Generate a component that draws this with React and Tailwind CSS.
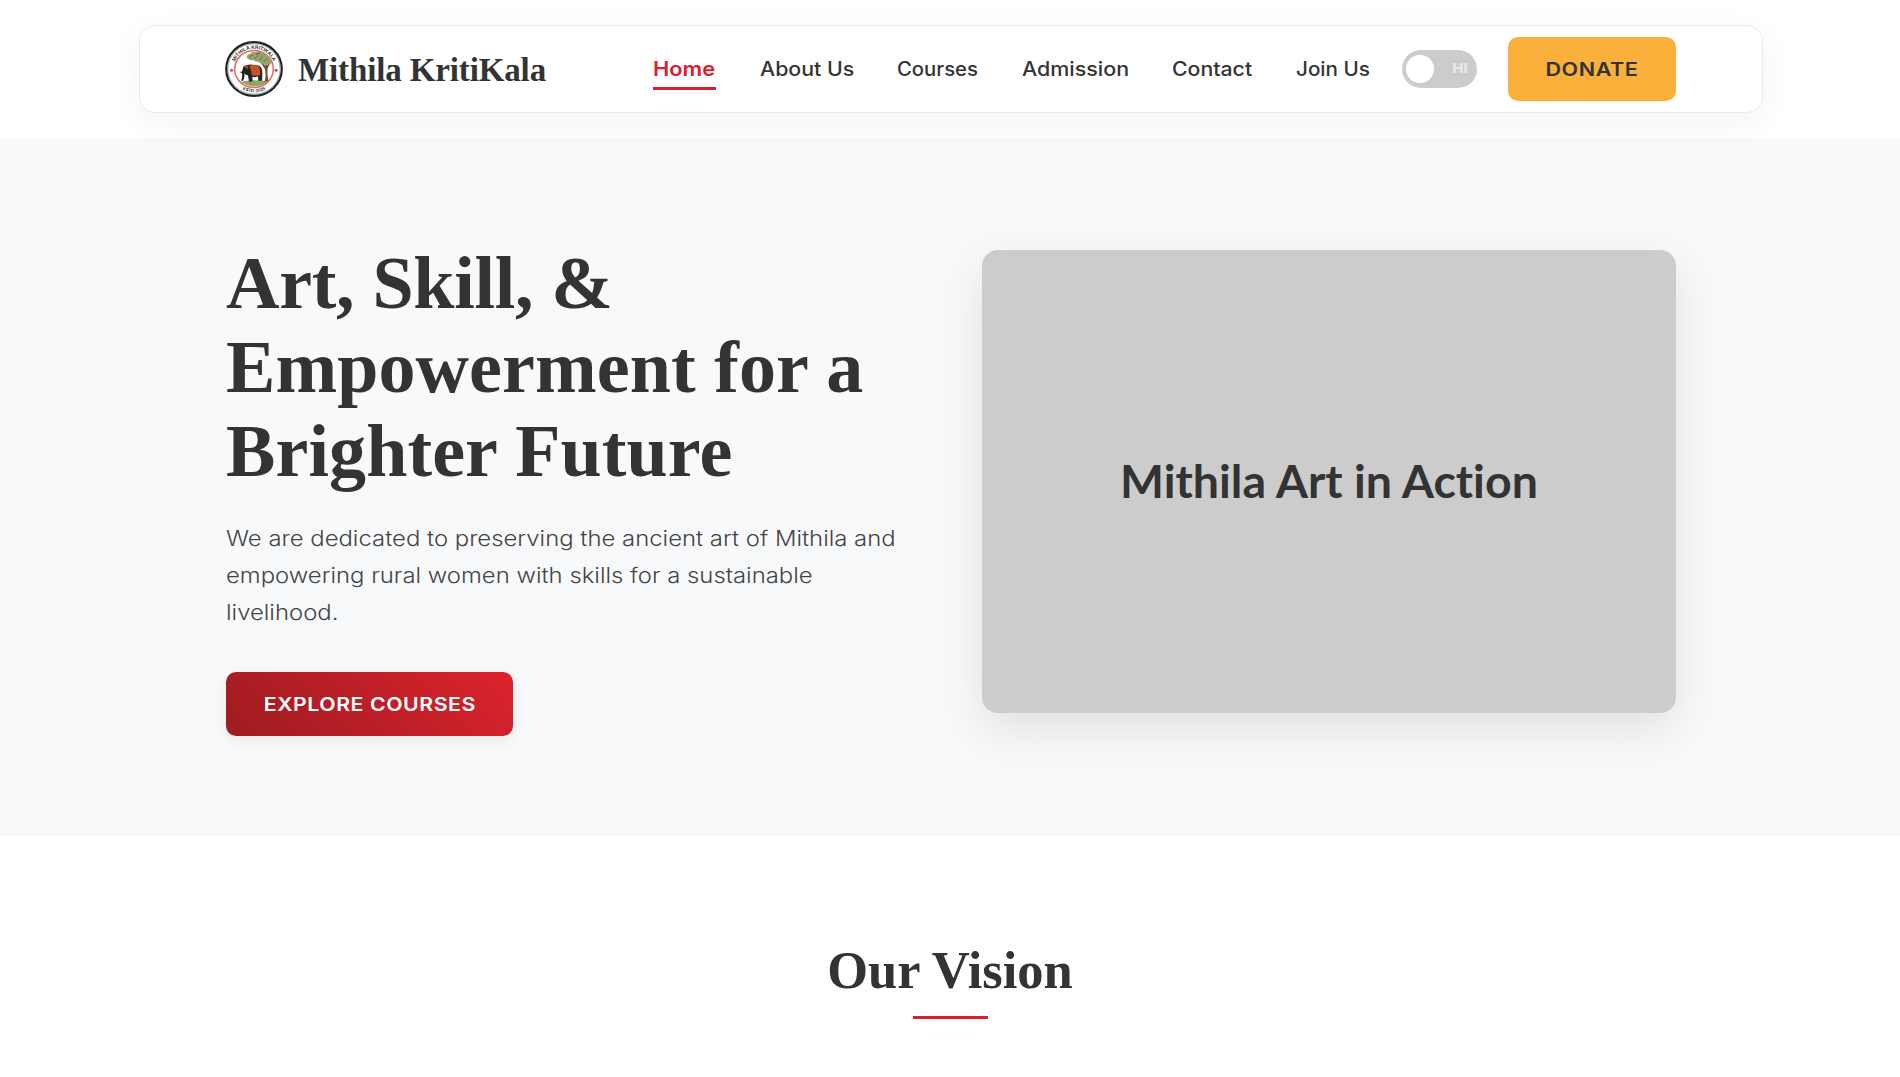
import React from "react";

const links = [
  { label: "About Us", box: "w-[94px]", stretch: "scale-x-[1.095]" },
  { label: "Courses", box: "w-[81px]", stretch: "scale-x-[1.04]" },
  { label: "Admission", box: "w-[107px]", stretch: "scale-x-[1.1]" },
  { label: "Contact", box: "w-[80px]", stretch: "scale-x-[1.09]" },
  { label: "Join Us", box: "w-[74px]", stretch: "scale-x-[1.06]" },
];

function Emblem() {
  return (
    <svg viewBox="0 0 58 56" preserveAspectRatio="none" className="h-14 w-[58px] shrink-0">
      <defs>
        <path id="arc-top" d="M8.4 28 A20.6 20.2 0 0 1 49.6 28" />
        <path id="arc-bottom" d="M5.2 28 A23.8 23.2 0 0 0 52.8 28" />
      </defs>
      <ellipse cx="29" cy="28" rx="27.8" ry="26.8" fill="#fff" stroke="#222" strokeWidth="2.2" />
      <ellipse cx="29" cy="28" rx="26.2" ry="25.2" fill="none" stroke="#777" strokeWidth="0.7" />
      <ellipse cx="29" cy="28" rx="19.3" ry="18.6" fill="#fff" stroke="#e8655f" strokeWidth="1.5" />
      <text fontFamily="Liberation Sans" fontWeight="bold" fontSize="5" fill="#2b2b2b">
        <textPath href="#arc-top" startOffset="50%" textAnchor="middle">MITHILA KRITIKALA</textPath>
      </text>
      <text fontFamily="Liberation Sans" fontWeight="bold" fontSize="4.4" fill="#333">
        <textPath href="#arc-bottom" startOffset="50%" textAnchor="middle">ESTD. 2025</textPath>
      </text>
      <circle cx="6.6" cy="29.3" r="1.5" fill="#e0453d" />
      <circle cx="51.2" cy="29.3" r="1.5" fill="#e0453d" />
      <path d="M17 40.5 Q29 38.5 41 40 L42 41 Q37 45.5 29 45.2 Q22 45 17 41.5Z" fill="#8fa860" />
      <path d="M39.5 41 Q41.6 34 39.8 28 L36 22 L37 21.5 L40.5 25 L40.8 19 L42 19 L42 24.5 L44.5 21.5 L45.2 22.2 L42.6 27.5 Q42 35 43.4 40Z" fill="#7b4a34" />
      <path d="M22 17 Q21 13.5 25 13 Q27 10 31 11 Q35 9.8 38 12 Q42 12.3 43.4 16 Q46.5 18 46.2 22 Q45 25 42.8 23 Q40 25 37.6 22.6 Q34.5 23 33.5 20.5 Q30 21.5 28.8 19 Q25 20 22 17Z" fill="#95a36c" />
      <path d="M24 16 L28 14 M29 18 L33 14.5 M34 19 L38 15.5 M38.5 21 L42 17.5 M31 13 L35 12.5" stroke="#5f6f3d" strokeWidth="1" />
      <path d="M17.5 29 Q17.5 24.5 22 24.3 Q25 23 29 24 Q35 23.2 36.8 28 Q37.8 32 37 39.8 H33.3 L33 35.3 Q29.5 37 27.5 35.5 L27.5 40.5 H24 L23 34.5 Q20.8 34 19.6 32.5 Q19.7 38 17.6 40 L16.2 39.4 Q17.6 36 17 32 L14.5 31.3 L17 30.6Z" fill="#272324" />
      <path d="M24.3 25.2 Q29 22.5 33.6 24.8 Q35.6 28 35.2 34 Q31.5 35.6 26.6 34 Q26.8 29 24.3 25.2Z" fill="#c4541f" />
      <path d="M19 25 Q21.5 23.5 23.3 25.6 L22.3 28.5Z" fill="#b94a25" />
    </svg>
  );
}

export default function App() {
  return (
    <div className="h-[1077px] w-full overflow-hidden bg-white font-['Inter',sans-serif] text-[#333]">
      <header className="flex h-[138px] pt-[25px] pl-[139px]">
        <nav className="flex h-[88px] w-[1624px] items-center rounded-2xl border border-[#ebebeb] bg-white pl-[85px] shadow-[0_8px_32px_rgba(0,0,0,0.05)]">
          <Emblem />
          <a className="ml-[15px] w-[355px] shrink-0 whitespace-nowrap pt-0.5 font-['Liberation_Serif',serif] text-[33px] leading-10 font-bold tracking-[-0.13px]">
            Mithila KritiKala
          </a>
          <div className="flex shrink-0 items-center gap-[43.6px] text-[19.5px] leading-[30px] font-medium">
            <a className="relative w-[63px] whitespace-nowrap text-[#da202c]">
              <span className="block w-max origin-left scale-x-[1.12] font-semibold">Home</span>
              <span className="absolute -bottom-1.5 left-0 h-[3px] w-full bg-[#da202c]" />
            </a>
            {links.map((l) => (
              <a key={l.label} className={l.box + " whitespace-nowrap"}>
                <span className={"block w-max origin-left " + l.stretch}>{l.label}</span>
              </a>
            ))}
          </div>
          <button className="ml-8 flex h-[38px] w-[75px] shrink-0 items-center justify-between rounded-full bg-[#ccc] pr-2.5 pl-1">
            <span className="size-7 rounded-full bg-white" />
            <span className="pb-px text-[13.5px] font-extrabold text-[#e9e9e9]">
              <span className="block scale-x-[1.1]">HI</span>
            </span>
          </button>
          <a className="ml-[31px] flex h-16 w-[168px] shrink-0 items-center justify-center rounded-[10px] bg-[#fbb03b] text-[19px] font-semibold tracking-[0.5px]">
            <span className="scale-x-[1.135] pt-0.5">DONATE</span>
          </a>
        </nav>
      </header>

      <section className="flex h-[698px] items-start justify-between bg-[#f8f9fb] pr-56 pl-[226px]">
        <div className="w-[680px] pt-[103px]">
          <h1 className="font-['Liberation_Serif',serif] text-[74px] leading-[84px] font-bold whitespace-nowrap">
            <span className="tracking-[-0.3px]">Art, Skill, &amp;</span>
            <br />
            <span className="tracking-[0.1px]">Empowerment for a</span>
            <br />
            <span className="tracking-[0.1px]">Brighter Future</span>
          </h1>
          <p className="mt-[27px] w-max origin-left scale-x-[1.127] text-[21.2px] leading-[37px] font-light whitespace-nowrap text-[#444]">
            We are dedicated to preserving the ancient art of Mithila and
            <br />
            empowering rural women with skills for a sustainable
            <br />
            livelihood.
          </p>
          <a className="mt-[41px] flex h-16 w-[287px] items-center justify-center rounded-[10px] bg-[linear-gradient(45deg,#9e1b21,#dc232d)] text-[19px] font-semibold tracking-[0.5px] whitespace-nowrap text-white shadow-[0_4px_15px_rgba(0,0,0,0.07)]">
            <span className="scale-x-[1.118] pt-0.5">EXPLORE COURSES</span>
          </a>
        </div>
        <div className="mt-28 flex h-[463px] w-[694px] items-center justify-center rounded-2xl bg-[#ccc] pb-0.5 font-['Lato',sans-serif] text-[46.5px] font-bold shadow-[0_16px_48px_rgba(0,0,0,0.1)] [font-variant-ligatures:none]">
          Mithila Art in Action
        </div>
      </section>

      <section className="flex flex-col items-center pt-[104px]">
        <h2 className="font-['Liberation_Serif',serif] text-[52.5px] leading-[60px] font-bold">Our Vision</h2>
        <div className="mt-4 h-[3px] w-[75px] bg-[#da202c]" />
      </section>
    </div>
  );
}
